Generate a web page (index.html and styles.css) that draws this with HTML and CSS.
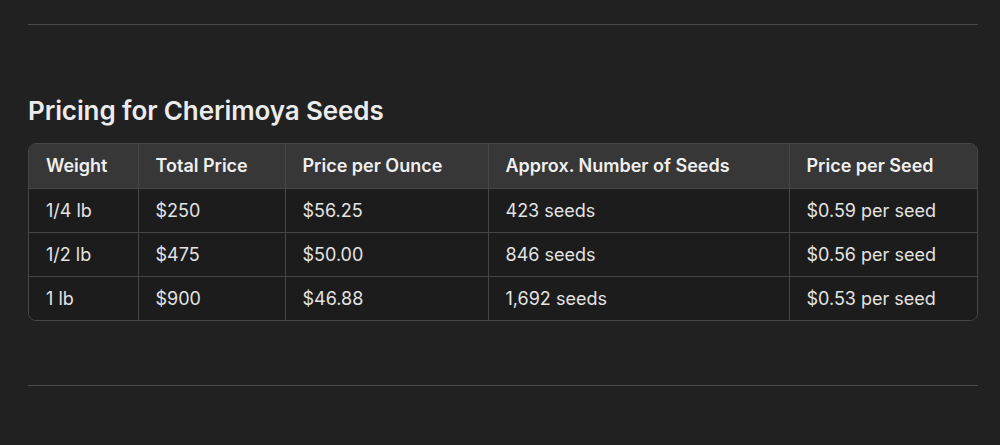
FILE: index.html
```html
<!DOCTYPE html>
<html lang="en">
<head>
<meta charset="utf-8">
<title>Pricing for Cherimoya Seeds</title>
<link rel="stylesheet" href="styles.css">
</head>
<body>
<main class="page">
  <hr class="rule rule-top">
  <h2 class="title">Pricing for Cherimoya Seeds</h2>
  <div class="table-wrap">
    <table class="pricing">
      <colgroup>
        <col class="c1">
        <col class="c2">
        <col class="c3">
        <col class="c4">
        <col class="c5">
      </colgroup>
      <thead>
        <tr>
          <th>Weight</th>
          <th>Total Price</th>
          <th>Price per Ounce</th>
          <th>Approx. Number of Seeds</th>
          <th>Price per Seed</th>
        </tr>
      </thead>
      <tbody>
        <tr>
          <td>1/4 lb</td>
          <td>$250</td>
          <td>$56.25</td>
          <td>423 seeds</td>
          <td>$0.59 per seed</td>
        </tr>
        <tr>
          <td>1/2 lb</td>
          <td>$475</td>
          <td>$50.00</td>
          <td>846 seeds</td>
          <td>$0.56 per seed</td>
        </tr>
        <tr>
          <td>1 lb</td>
          <td>$900</td>
          <td>$46.88</td>
          <td>1,692 seeds</td>
          <td>$0.53 per seed</td>
        </tr>
      </tbody>
    </table>
  </div>
  <hr class="rule rule-bottom">
</main>
</body>
</html>
```

FILE: styles.css
```css
html, body {
  margin: 0;
  padding: 0;
  background: #212121;
}

body {
  font-family: Inter, "Noto Sans", "Liberation Sans", sans-serif;
  color: #ececec;
  width: 1000px;
  height: 445px;
  overflow: hidden;
}

.page {
  padding: 24px 22px 0 28px;
}

.rule {
  border: 0;
  height: 1px;
  background: #4a4a4a;
  margin: 0;
}

.title {
  margin: 70px 0 16px 0;
  font-size: 26px;
  line-height: 32px;
  font-weight: 600;
  color: #ececec;
  letter-spacing: -0.1px;
}

.table-wrap {
  border: 1px solid #474747;
  border-radius: 8px;
  overflow: hidden;
}

.pricing {
  width: 100%;
  border-collapse: collapse;
  table-layout: fixed;
  font-size: 18px;
}

.pricing th,
.pricing td {
  box-sizing: border-box;
  text-align: left;
  padding: 0 0 0 17px;
  height: 44px;
  white-space: nowrap;
  border-right: 1px solid #474747;
  border-bottom: 1px solid #474747;
}

.pricing th:last-child,
.pricing td:last-child {
  border-right: 0;
}

.pricing tbody tr:last-child td {
  border-bottom: 0;
}

.pricing th {
  background: #373737;
  font-weight: 600;
  color: #efefef;
}

.pricing td {
  background: #1c1c1c;
  font-weight: 400;
  color: #e3e3e3;
}

.c1 { width: 109px; }
.c2 { width: 147px; }
.c3 { width: 203px; }
.c4 { width: 301px; }
.c5 { width: auto; }

.rule-bottom {
  margin-top: 64px;
}
```
